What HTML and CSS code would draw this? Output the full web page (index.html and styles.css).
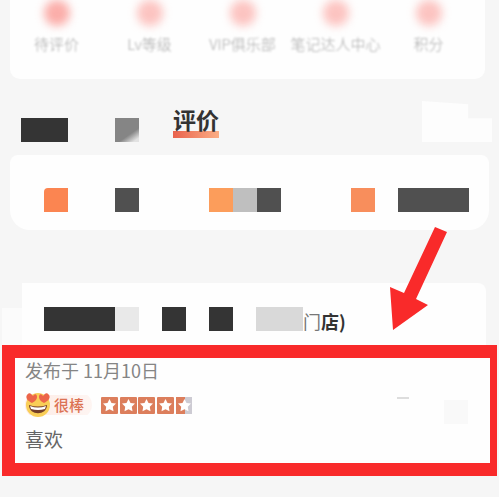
FILE: index.html
```html
<!DOCTYPE html>
<html lang="zh-CN">
<head>
  <meta charset="UTF-8">
  <meta name="viewport" content="width=device-width, initial-scale=1.0">
  <title>评价</title>
  <link rel="stylesheet" href="styles.css">
</head>
<body>
<div class="page">
  <nav class="menu">
    <a class="menu-item" href="#"><span class="dot strong"></span>待评价</a>
    <a class="menu-item" href="#"><span class="dot"></span>Lv等级</a>
    <a class="menu-item" href="#"><span class="dot"></span>VIP俱乐部</a>
    <a class="menu-item" href="#"><span class="dot"></span>笔记达人中心</a>
    <a class="menu-item" href="#"><span class="dot"></span>积分</a>
  </nav>

  <header class="tabs">
    <span class="block dark w2"></span>
    <span class="block fade"></span>
    <h1 class="tab-title">评价</h1>
    <span class="patch"></span>
  </header>

  <section class="filters">
    <span class="block coral"></span>
    <span class="block grey"></span>
    <span class="strip">
      <span class="block orange"></span>
      <span class="block silver"></span>
      <span class="block grey"></span>
    </span>
    <span class="block salmon"></span>
    <span class="block grey w3"></span>
  </section>

  <section class="shop">
    <span class="strip">
      <span class="block dark w3"></span>
      <span class="block pale"></span>
    </span>
    <span class="block dark"></span>
    <span class="block dark"></span>
    <h2 class="shop-name"><span class="block light w2"></span><span class="thin">门</span>店)</h2>
    <!-- 指向评价的箭头 -->
    <svg class="arrow" viewBox="0 0 60 106" aria-hidden="true">
      <path d="M46 1 L58 6 L27 73 L39 79 L4 104 L1 61 L15 67 Z" fill="#f92a2a"/>
    </svg>
  </section>

  <article class="review">
    <p class="date">发布于 11月10日</p>
    <div class="rating">
      <span class="mood">
        <svg class="emoji" viewBox="0 0 26 26" aria-hidden="true">
          <circle cx="13" cy="13" r="12" fill="#f9ce57"/>
          <path d="M7 11 C3 9 0 6 2 3 C4 0 6 1 8 4 C10 1 12 2 12 5 C12 8 9 10 7 11 Z" fill="#ec6549"/>
          <path d="M19 11 C17 10 14 8 14 5 C14 2 16 1 18 4 C20 1 22 0 24 3 C26 6 23 9 19 11 Z" fill="#ec6549"/>
          <path d="M4 13 Q13 16 22 13 C22 24 4 24 4 13 Z" fill="#743e28"/>
          <path d="M5 14 Q13 17 21 14 L20 17 Q13 19 6 17 Z" fill="#fff"/>
        </svg>
        很棒
      </span>
      <svg class="stars" viewBox="0 0 92 17" role="img" aria-label="4.5">
        <defs>
          <path id="star" d="M8.5 2 L10.5 6 L15 6.6 L11.8 9.8 L12.5 14.3 L8.5 12.2 L4.5 14.3 L5.2 9.8 L2 6.6 L6.5 6 Z" fill="#fff"/>
        </defs>
        <g fill="#dc7e5c">
          <rect width="17" height="17" rx="1"/>
          <rect x="19" width="17" height="17" rx="1"/>
          <rect x="37" width="17" height="17" rx="1"/>
          <rect x="56" width="17" height="17" rx="1"/>
          <rect x="75" width="9" height="17"/>
          <rect x="84" width="7" height="17" fill="#cdcbd3"/>
        </g>
        <use href="#star"/>
        <use href="#star" x="19"/>
        <use href="#star" x="37"/>
        <use href="#star" x="56"/>
        <use href="#star" x="75"/>
      </svg>
      <span class="mark"></span>
      <span class="smudge"></span>
    </div>
    <p class="comment">喜欢</p>
  </article>
</div>
</body>
</html>
```
FILE: styles.css
```css
* {
  box-sizing: border-box;
}
body {
  margin: 0;
  background-color: #f6f6f6;
  font-family: "Noto Sans CJK SC", sans-serif;
  color: #333333;
}
h1, h2, p {
  margin: 0;
}
.page {
  padding-right: 2px;
}
.menu {
  display: grid;
  grid-template-columns: repeat(5, 1fr);
  margin: 0 12px 0 10px;
  padding-right: 10px;
  height: 79px;
  background-color: #fefefe;
  border-radius: 0 0 10px 10px;
}
.menu-item {
  display: flex;
  flex-direction: column;
  align-items: center;
  gap: 8px;
  color: #aaaaaa;
  font-size: 15px;
  font-weight: 300;
  line-height: 20px;
  white-space: nowrap;
  text-decoration: none;
  filter: blur(1px);
}
.dot {
  width: 26px;
  height: 26px;
  border-radius: 50%;
  background-color: #fcc4c1;
  filter: blur(4px);
  flex-shrink: 0;
}
.dot.strong {
  background-color: #fbaeaa;
}
/* 马赛克色块 */
.block {
  display: inline-block;
  width: 24px;
  height: 24px;
  flex-shrink: 0;
}
.w2 {
  width: 47px;
}
.w3 {
  width: 71px;
}
.dark {
  background-color: #343434;
}
.grey {
  background-color: #505050;
}
.silver {
  background-color: #bfbfbf;
}
.light {
  background-color: #d9d9d9;
}
.pale {
  background-color: #e9e9e9;
}
.coral {
  background-color: #fb8551;
  border-radius: 4px 0 0 0;
}
.orange {
  background-color: #fc9d5b;
}
.salmon {
  background-color: #f88e5c;
}
.fade {
  background: linear-gradient(145deg, #858585 65%, #e2e2e2 90%);
}
.strip {
  display: flex;
}
.tabs {
  display: flex;
  align-items: flex-end;
  height: 63px;
  padding: 0 5px 0 21px;
}
.tabs .fade {
  margin: 0 34px 0 47px;
}
.tab-title {
  padding: 0 0 4px;
  margin-bottom: 4px;
  font-size: 23px;
  font-weight: 700;
  line-height: 30px;
  background: linear-gradient(to right, #e9624d, #fbae85) bottom / 100% 7px no-repeat;
}
.patch {
  width: 70px;
  height: 41px;
  margin-left: auto;
  background-color: #fdfdfd;
  clip-path: polygon(0 0, 66% 8%, 66% 42%, 100% 42%, 100% 100%, 0 100%);
}
.filters {
  display: flex;
  margin: 13px 8px 0 10px;
  padding: 33px 0 18px 34px;
  background-color: #fefefe;
  border-radius: 8px 8px 20px 20px;
}
.filters .coral {
  margin-right: 47px;
}
.filters .strip {
  margin: 0 70px;
}
.filters .salmon {
  margin-right: 23px;
}
.shop {
  display: flex;
  position: relative;
  margin: 53px 11px 0 2px;
  padding: 24px 0 0 42px;
  height: 62px;
  background:
    linear-gradient(#fefefe, #fefefe) right / calc(100% - 20px) 100% no-repeat,
    linear-gradient(#fbfbfb, #fbfbfb) bottom left / 20px 37px no-repeat;
  border-radius: 0 8px 0 0;
}
.shop > .strip,
.shop > .dark {
  margin-right: 23px;
}
.shop-name {
  display: flex;
  font-size: 18px;
  font-weight: 700;
  line-height: 28px;
  height: 24px;
}
.thin {
  color: #777777;
  font-weight: 400;
}
.arrow {
  position: absolute;
  right: 37px;
  bottom: 13px;
  width: 60px;
  height: 106px;
}
.review {
  margin-left: 2px;
  padding: 0 10px 10px;
  border: 13px solid #f92a2a;
  border-right-width: 7px;
  background-color: #fefefe;
}
.date {
  color: #858585;
  font-size: 18px;
  line-height: 24px;
}
.rating {
  display: flex;
  align-items: center;
  gap: 9px;
  height: 46px;
}
.mood {
  display: flex;
  align-items: center;
  gap: 3px;
  padding-right: 8px;
  color: #dc7354;
  font-size: 15px;
  font-weight: 500;
  line-height: 20px;
  border-radius: 13px;
  background: linear-gradient(to right, #fdebe5, #fef5f2) center / 100% 20px no-repeat;
}
.emoji {
  width: 26px;
  height: 26px;
}
.stars {
  width: 92px;
  height: 17px;
}
.mark {
  width: 12px;
  height: 2px;
  margin: 0 26px 14px auto;
  background-color: #dddddd;
}
.smudge {
  width: 24px;
  height: 24px;
  margin: 14px 12px 0 0;
  background-color: #f9f9f9;
}
.comment {
  margin-top: -4px;
  color: #666666;
  font-size: 19px;
  line-height: 29px;
}
```
